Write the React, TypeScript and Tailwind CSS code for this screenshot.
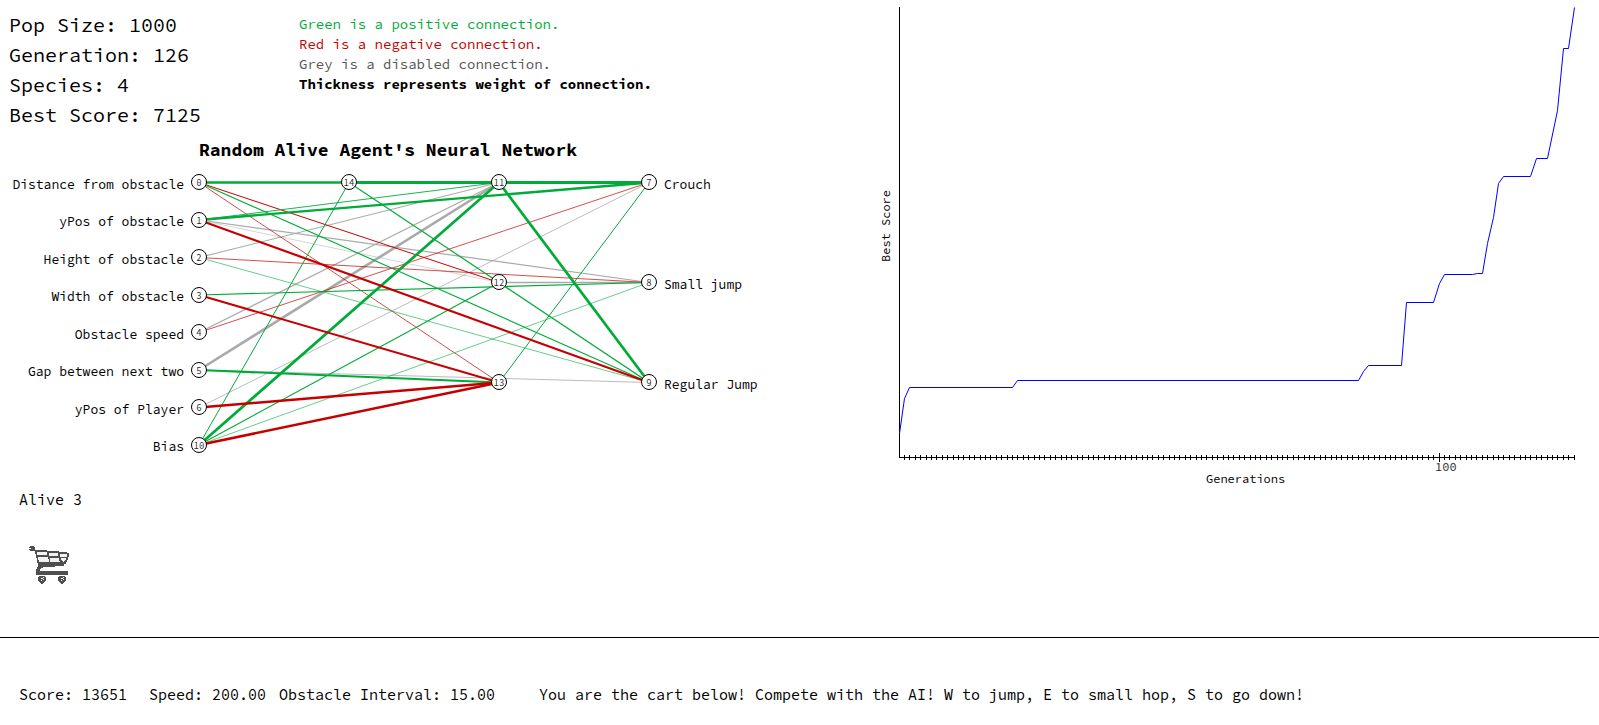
type Tone = "positive" | "negative" | "disabled";

interface NetNode {
  id: number;
  x: number;
  y: number;
  label?: string;
}

const COLUMNS = { input: 199, hiddenA: 349, hiddenB: 499, output: 649 };

const INPUTS: [number, string][] = [
  [0, "Distance from obstacle"],
  [1, "yPos of obstacle"],
  [2, "Height of obstacle"],
  [3, "Width of obstacle"],
  [4, "Obstacle speed"],
  [5, "Gap between next two"],
  [6, "yPos of Player"],
  [10, "Bias"],
];

const NODES: NetNode[] = [
  ...INPUTS.map(([id, label], row) => ({ id, label, x: COLUMNS.input, y: 12 + (row * 75) / 2 })),
  { id: 14, x: COLUMNS.hiddenA, y: 12 },
  { id: 11, x: COLUMNS.hiddenB, y: 12 },
  { id: 12, x: COLUMNS.hiddenB, y: 112 },
  { id: 13, x: COLUMNS.hiddenB, y: 212 },
  { id: 7, x: COLUMNS.output, y: 12, label: "Crouch" },
  { id: 8, x: COLUMNS.output, y: 112, label: "Small jump" },
  { id: 9, x: COLUMNS.output, y: 212, label: "Regular Jump" },
];

const STROKES: Record<Tone, string> = {
  positive: "#00ab39",
  negative: "#c60000",
  disabled: "#aaaaaa",
};

const EDGES: [number, number, Tone, number][] = [
  [1, 12, "disabled", 0.5],
  [5, 9, "disabled", 0.8],
  [6, 7, "disabled", 0.8],
  [2, 11, "disabled", 1.1],
  [4, 11, "disabled", 1.2],
  [5, 11, "disabled", 2.6],
  [1, 8, "disabled", 1.2],
  [12, 8, "disabled", 1.7],
  [0, 13, "negative", 0.7],
  [2, 8, "negative", 0.7],
  [4, 7, "negative", 0.7],
  [0, 12, "negative", 1],
  [2, 9, "positive", 0.6],
  [10, 8, "positive", 0.6],
  [10, 14, "positive", 1],
  [10, 12, "positive", 1.1],
  [0, 9, "positive", 1.1],
  [3, 8, "positive", 1.1],
  [1, 11, "positive", 0.9],
  [14, 12, "positive", 1.2],
  [12, 9, "positive", 1.4],
  [13, 7, "positive", 1],
  [0, 14, "positive", 2.6],
  [14, 11, "positive", 3],
  [11, 7, "positive", 3],
  [1, 7, "positive", 2.4],
  [10, 11, "positive", 2.7],
  [11, 9, "positive", 2.7],
  [1, 9, "negative", 2.2],
  [3, 13, "negative", 2],
  [5, 13, "positive", 2],
  [6, 13, "negative", 2.5],
  [10, 13, "negative", 2.6],
];

const nodeById = (id: number) => NODES.find((n) => n.id === id)!;

function NeuralNetwork() {
  return (
    <svg width="780" height="285" viewBox="0 0 780 285" role="img" aria-label="Neural network">
      {EDGES.map(([from, to, tone, width]) => {
        const a = nodeById(from);
        const b = nodeById(to);
        return (
          <line
            key={`${from}-${to}`}
            x1={a.x}
            y1={a.y + 0.5}
            x2={b.x}
            y2={b.y + 0.5}
            stroke={STROKES[tone]}
            strokeWidth={width}
          />
        );
      })}
      {NODES.map((n) => (
        <g key={n.id}>
          <circle cx={n.x} cy={Math.round(n.y)} r="7.5" fill="#fff" stroke="#000" />
          <text
            x={n.x}
            y={Math.round(n.y) + 4}
            textAnchor="middle"
            className="fill-neutral-800 text-[9px]"
          >
            {n.id}
          </text>
          {n.label && (
            <text
              x={n.x === COLUMNS.input ? n.x - 15 : n.x + 15}
              y={Math.floor(n.y) + 7}
              textAnchor={n.x === COLUMNS.input ? "end" : "start"}
              className="fill-black text-[13px]"
            >
              {n.label}
            </text>
          )}
        </g>
      ))}
    </svg>
  );
}

const SCORE_POINTS: [number, number][] = [
  [19, 426], [24, 391], [29, 380], [132, 380], [137, 373], [478, 373],
  [483, 364], [488, 358], [521, 358], [526, 295], [553, 295], [559, 276],
  [564, 267], [592, 267], [597, 266], [602, 266], [607, 236], [613, 210],
  [618, 176], [623, 169], [650, 169], [656, 151], [667, 151], [677, 103],
  [683, 41], [688, 41], [694, 0],
];

const GENERATIONS = 125;

function ScoreChart() {
  const left = 19.5;
  const step = 675 / GENERATIONS;
  const ticks = Array.from({ length: GENERATIONS }, (_, i) => i + 1);
  return (
    <svg width="730" height="490" viewBox="-11 -7 730 490" role="img" aria-label="Best score by generation">
      <g stroke="#000" shapeRendering="crispEdges">
        <line x1={left} y1="0" x2={left} y2="451" />
        <line x1="19" y1="450.5" x2="695" y2="450.5" />
        {ticks.map((g) => {
          const x = Math.floor(19 + g * step) + 0.5;
          const reach = g % 100 === 0 ? 4 : 2;
          return <line key={g} x1={x} y1={450 - reach} x2={x} y2={451 + reach} />;
        })}
      </g>
      <polyline
        points={SCORE_POINTS.map(([x, y]) => `${x + 0.5},${y + 0.5}`).join(" ")}
        fill="none"
        stroke="#0000ff"
      />
      <text x="555" y="464" className="fill-neutral-800 text-[12px]">100</text>
      <text x="326" y="476" className="fill-black text-[12px]">Generations</text>
      <text transform="translate(10 255) rotate(-90)" className="fill-black text-[12px]">
        Best Score
      </text>
    </svg>
  );
}

function Cart() {
  return (
    <svg width="42" height="40" viewBox="4 5 42 40" role="img" aria-label="Cart" shapeRendering="crispEdges">
      <g fill="#4f4f4f">
        <path d="M6 6H10V7H11V10H23V11H35V12H43V13H45V17H44V20H43V22H42V24H40V26H31V27H19V28H17V29H16V31H44V35H12V29H13V27H14V23H13V18H12V14H11V11H6V10H5V9H7V8H5V7H6Z" />
        <path d="M15 36H21V37H22V41H21V42H20V43H19V44H17V43H16V42H15V41H14V37H15Z" />
        <path d="M35 36H41V37H42V41H41V42H40V43H39V44H37V43H36V42H35V41H34V37H35Z" />
      </g>
      <g fill="#f1f3f3">
        <path d="M13 12H23V15H13Z" />
        <path d="M25 13H34V16H25Z" />
        <path d="M36 14H43V17H36Z" />
        <path d="M14 17H24V19H25V22H15V20H14Z" />
        <path d="M26 18H35V21H36V22H26Z" />
        <path d="M37 18H42V20H41V21H40V22H39V21H38V20H37Z" />
        <path d="M19 37H20V38H19ZM17 38H19V39H17ZM19 39H20V40H19ZM17 40H18V41H17Z" />
        <path d="M39 37H40V38H39ZM37 38H39V39H37ZM39 39H40V40H39ZM37 40H38V41H37Z" />
      </g>
    </svg>
  );
}

export default function App() {
  return (
    <main className="min-h-screen overflow-hidden bg-white font-['Source_Code_Pro','Liberation_Mono',monospace] text-black">
      <div className="flex justify-between">
        <section className="min-w-0 flex-1">
          <div className="flex gap-[98px] pt-[10px] pl-[9px]">
            <div className="text-[20px] leading-[30px]">
              <p>Pop Size: 1000</p>
              <p>Generation: 126</p>
              <p>Species: 4</p>
              <p>Best Score: 7125</p>
            </div>
            <div className="pt-[4px] text-[14px] leading-[20px]">
              <p className="text-[#00ab39]">Green is a positive connection.</p>
              <p className="text-[#c60000]">Red is a negative connection.</p>
              <p className="text-[#555555]">Grey is a disabled connection.</p>
              <p className="font-bold">Thickness represents weight of connection.</p>
            </div>
          </div>
          <h1 className="mt-[5px] pl-[199px] text-[18px] leading-[30px] font-bold">
            Random Alive Agent's Neural Network
          </h1>
          <div className="mt-[5px]">
            <NeuralNetwork />
          </div>
        </section>
        <section className="shrink-0">
          <ScoreChart />
        </section>
      </div>
      <section className="border-b border-black pb-[52px] pl-[19px]">
        <p className="text-[15px] leading-[20px]">Alive 3</p>
        <div className="pt-[35px] pl-[9px]">
          <Cart />
        </div>
      </section>
      <footer className="flex pt-[46px] pl-[19px] text-[15px] leading-[22px] whitespace-pre">
        <p className="w-[130px]">Score: 13651</p>
        <p className="w-[130px]">Speed: 200.00</p>
        <p className="w-[260px]">Obstacle Interval: 15.00</p>
        <p>You are the cart below! Compete with the AI! W to jump, E to small hop, S to go down!</p>
      </footer>
    </main>
  );
}
